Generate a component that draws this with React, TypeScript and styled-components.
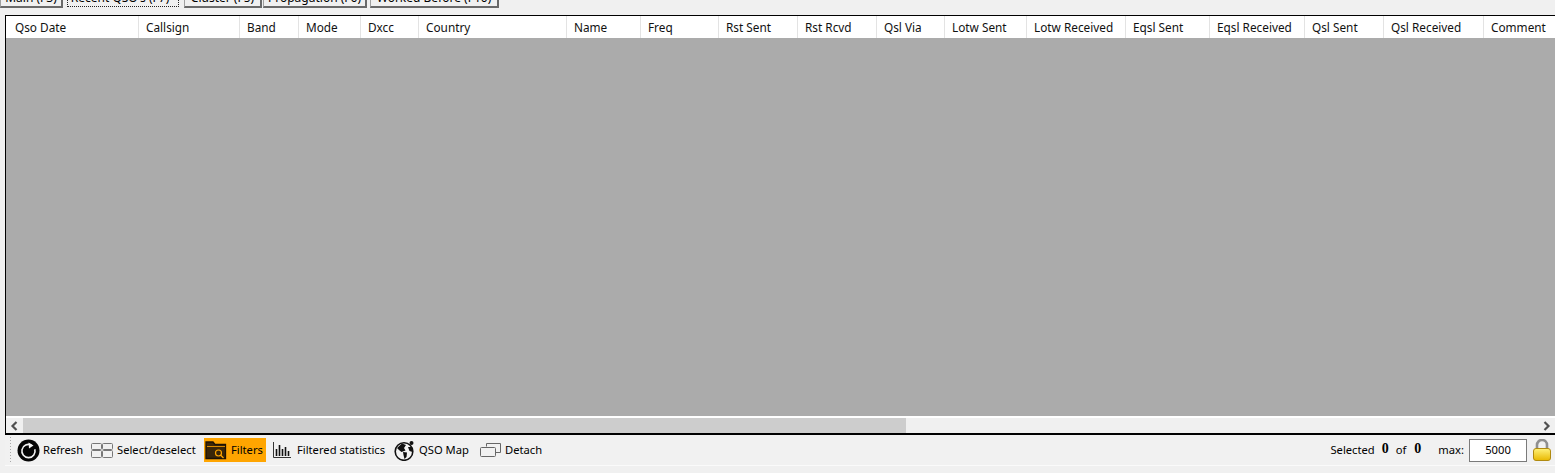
import React from "react";
import styled, { createGlobalStyle } from "styled-components";

const Global = createGlobalStyle`
  html, body { margin: 0; padding: 0; background: #f0f0f0; overflow: hidden; }
  body { font-family: "Noto Sans", "Open Sans", sans-serif; font-size: 12px; color: #000; }
`;

const Page = styled.div`
  width: 1555px;
  height: 473px;
  overflow: hidden;
  display: flex;
  flex-direction: column;
`;

const TabBar = styled.div`
  display: flex;
  height: 23px;
  margin-top: -15px;
  flex: none;
`;

const TabButton = styled.div<{ $w: number; $ml: number; $focus?: boolean }>`
  width: ${(p) => p.$w}px;
  margin-left: ${(p) => p.$ml}px;
  height: ${(p) => (p.$focus ? 22 : 23)}px;
  box-sizing: border-box;
  background: #f0f0f0;
  border: 1px ${(p) => (p.$focus ? "dotted #222" : "solid #a0a0a0")};
  border-right-color: ${(p) => (p.$focus ? "#222" : "#696969")};
  border-bottom-color: ${(p) => (p.$focus ? "#222" : "#696969")};
  border-bottom-width: ${(p) => (p.$focus ? 1 : 2)}px;
  border-right-width: ${(p) => (p.$focus ? 1 : 2)}px;
  padding-right: ${(p) => (p.$focus ? 6 : 0)}px;
  text-align: center;
  font-size: 12px;
  line-height: 24px;
  white-space: nowrap;
`;

const Grid = styled.div`
  margin: 7px 0 0 5px;
  width: 1550px;
  height: 420px;
  box-sizing: border-box;
  border: 1px solid #000;
  border-right: none;
  border-bottom: 2px solid #000;
  display: flex;
  flex-direction: column;
  flex: none;
`;

const HeaderRow = styled.div`
  display: flex;
  height: 22px;
  background: #fff;
  flex: none;
  overflow: hidden;
`;

const HeaderCell = styled.div<{ $w: number; $first?: boolean }>`
  width: ${(p) => p.$w}px;
  flex: none;
  box-sizing: border-box;
  height: 22px;
  padding-left: ${(p) => (p.$first ? 9 : 7)}px;
  font-size: 11.8px;
  line-height: 22px;
  border-right: 1px solid #e3e3e3;
  white-space: nowrap;
  color: #111;
`;

const Body = styled.div`
  flex: 1;
  background: #ababab;
`;

const ScrollBar = styled.div`
  height: 17px;
  background: #f0f0f0;
  display: flex;
  align-items: center;
  flex: none;
  border-top: 2px solid #fff;
  box-sizing: border-box;
`;

const ScrollArrow = styled.div`
  width: 17px;
  height: 15px;
  flex: none;
  display: flex;
  align-items: center;
  justify-content: center;
`;

const ScrollTrack = styled.div`
  flex: 1;
  height: 15px;
`;

const ScrollThumb = styled.div`
  width: 883px;
  height: 15px;
  background: #cdcdcd;
`;

const ToolBar = styled.div`
  height: 30px;
  margin-left: 5px;
  width: 1550px;
  background: #f1f1f1;
  border-bottom: 1px solid #fafafa;
  display: flex;
  align-items: center;
  flex: none;
  font-size: 11.2px;
`;

const Grip = styled.div`
  width: 3px;
  height: 28px;
  margin-left: 4px;
  flex: none;
  background-image: radial-gradient(circle, #a8a8a8 0.9px, transparent 1px);
  background-size: 3px 3px;
`;

const ToolItem = styled.div<{ $w: number; $gap: number; $active?: boolean; $ml?: number; $pl?: number }>`
  width: ${(p) => p.$w}px;
  margin-left: ${(p) => p.$ml ?? 0}px;
  padding-left: ${(p) => p.$pl ?? 0}px;
  box-sizing: border-box;
  height: 24px;
  flex: none;
  display: flex;
  align-items: center;
  gap: ${(p) => p.$gap}px;
  background: ${(p) => (p.$active ? "#ffa500" : "transparent")};
  white-space: nowrap;
`;

const ToolLabel = styled.span`
  margin-top: -2px;
`;

const Icon = styled.svg`
  flex: none;
  display: block;
`;

const Spacer = styled.div`
  flex: 1;
`;

const StatusText = styled.span<{ $ml?: number }>`
  margin-left: ${(p) => p.$ml ?? 0}px;
  margin-top: -2px;
  flex: none;
  white-space: nowrap;
`;

const Count = styled.span<{ $ml: number }>`
  margin-left: ${(p) => p.$ml}px;
  margin-top: -2px;
  font-family: "Liberation Serif", serif;
  font-weight: 700;
  font-size: 14px;
  flex: none;
`;

const MaxBox = styled.div`
  width: 58px;
  height: 23px;
  margin-left: 5px;
  box-sizing: border-box;
  background: #fff;
  border: 1px solid #7a7a7a;
  text-align: center;
  line-height: 20px;
  flex: none;
`;

const LockWrap = styled.div`
  margin: 0 4px 0 6px;
  flex: none;
  display: flex;
`;

const columns: [string, number][] = [
  ["Qso Date", 133],
  ["Callsign", 101],
  ["Band", 59],
  ["Mode", 62],
  ["Dxcc", 58],
  ["Country", 148],
  ["Name", 74],
  ["Freq", 78],
  ["Rst Sent", 79],
  ["Rst Rcvd", 79],
  ["Qsl Via", 68],
  ["Lotw Sent", 82],
  ["Lotw Received", 99],
  ["Eqsl Sent", 84],
  ["Eqsl Received", 95],
  ["Qsl Sent", 79],
  ["Qsl Received", 100],
  ["Comment", 72],
];

export default function App() {
  return (
    <Page>
      <Global />
      <TabBar>
        <TabButton $w={63} $ml={0}>Main (F3)</TabButton>
        <TabButton $w={112} $ml={4} $focus>Recent QSO's (F7)</TabButton>
        <TabButton $w={78} $ml={5}>Cluster (F5)</TabButton>
        <TabButton $w={104} $ml={1}>Propagation (F6)</TabButton>
        <TabButton $w={129} $ml={3}>Worked Before (F10)</TabButton>
      </TabBar>
      <Grid>
        <HeaderRow>
          {columns.map(([label, w], i) => (
            <HeaderCell key={label} $w={w} $first={i === 0}>{label}</HeaderCell>
          ))}
        </HeaderRow>
        <Body />
        <ScrollBar>
          <ScrollArrow>
            <svg width="9" height="10" viewBox="0 0 9 10"><path d="M6.5 1 L2.5 5 L6.5 9" fill="none" stroke="#505050" strokeWidth="2.2" /></svg>
          </ScrollArrow>
          <ScrollTrack><ScrollThumb /></ScrollTrack>
          <ScrollArrow>
            <svg width="9" height="10" viewBox="0 0 9 10"><path d="M2.5 1 L6.5 5 L2.5 9" fill="none" stroke="#505050" strokeWidth="2.2" /></svg>
          </ScrollArrow>
        </ScrollBar>
      </Grid>
      <ToolBar>
        <Grip />
        <ToolItem $w={74} $gap={3} $ml={5}>
          <Icon width="23" height="23" viewBox="0 0 23 23">
            <circle cx="11.5" cy="11.5" r="11" fill="#050505" />
            <path d="M14.5 6.2 A6.6 6.6 0 1 0 17.8 10.2" fill="none" stroke="#f4f4f4" strokeWidth="1.6" />
            <path d="M11.5 3.5 L16.5 6.5 L12 9.5 Z" fill="#f4f4f4" />
          </Icon>
          <ToolLabel>Refresh</ToolLabel>
        </ToolItem>
        <ToolItem $w={113} $gap={4}>
          <Icon width="22" height="15" viewBox="0 0 22 15">
            <rect x="0.5" y="0.5" width="10" height="6" rx="1" fill="none" stroke="#777" />
            <rect x="11.5" y="0.5" width="10" height="6" rx="1" fill="none" stroke="#777" />
            <rect x="0.5" y="7.5" width="10" height="7" rx="1" fill="none" stroke="#777" />
            <rect x="11.5" y="7.5" width="10" height="7" rx="1" fill="none" stroke="#777" />
          </Icon>
          <ToolLabel>Select/deselect</ToolLabel>
        </ToolItem>
        <ToolItem $w={62} $gap={4} $pl={1} $active>
          <Icon width="22" height="20" viewBox="0 0 22 20">
            <path d="M1 18.5 V2 H8 L10 4.5 H20.5 V18.5 Z" fill="#3a2608" stroke="#1c1204" strokeWidth="1.3" />
            <path d="M2 6.5 H20" stroke="#ffa500" strokeWidth="0.8" />
            <circle cx="13.5" cy="13" r="3" fill="none" stroke="#ffa500" strokeWidth="1.2" />
            <path d="M15.5 15 L18.5 18" stroke="#ffa500" strokeWidth="1.3" />
          </Icon>
          <ToolLabel>Filters</ToolLabel>
        </ToolItem>
        <ToolItem $w={121} $gap={6} $ml={7}>
          <Icon width="18" height="18" viewBox="0 0 18 18">
            <path d="M0.5 1 V16.5 H18" fill="none" stroke="#333" strokeWidth="1" />
            <path d="M3.5 8 V15 M6.5 4 V15 M9.5 8 V15 M12.5 6 V15 M15.5 10 V15" stroke="#111" strokeWidth="1.6" />
          </Icon>
          <ToolLabel>Filtered statistics</ToolLabel>
        </ToolItem>
        <ToolItem $w={86} $gap={4}>
          <Icon width="21" height="21" viewBox="0 0 21 21">
            <circle cx="10" cy="11.5" r="8.8" fill="#f4f4f4" stroke="#111" strokeWidth="1.6" />
            <path d="M3 8 L8 3.5 L12 5 L10 8 L11.5 10.5 L7.5 12 L5 10 Z" fill="#111" />
            <path d="M9 12 L13 12.5 L12.5 17 L10.5 19 L9.5 15 Z" fill="#111" />
            <path d="M14 7 L18 7 L18.5 12 L15.5 11 Z" fill="#111" />
            <circle cx="17.5" cy="3" r="2" fill="#111" />
          </Icon>
          <ToolLabel>QSO Map</ToolLabel>
        </ToolItem>
        <ToolItem $w={66} $gap={4}>
          <Icon width="21" height="16" viewBox="0 0 21 16">
            <path d="M6.5 4.5 V1.5 H20.5 V10.5 H15.5" fill="none" stroke="#666" strokeWidth="1" />
            <rect x="0.5" y="5.5" width="15" height="9" rx="1" fill="#f1f1f1" stroke="#666" strokeWidth="1" />
          </Icon>
          <ToolLabel>Detach</ToolLabel>
        </ToolItem>
        <Spacer />
        <StatusText>Selected</StatusText>
        <Count $ml={7}>0</Count>
        <StatusText $ml={7}>of</StatusText>
        <Count $ml={8}>0</Count>
        <StatusText $ml={17}>max:</StatusText>
        <MaxBox>5000</MaxBox>
        <LockWrap>
          <Icon width="18" height="22" viewBox="0 0 18 22">
            <defs>
              <linearGradient id="lockBody" x1="0" y1="0" x2="0" y2="1">
                <stop offset="0" stopColor="#fff27a" />
                <stop offset="1" stopColor="#e8b800" />
              </linearGradient>
            </defs>
            <path d="M4 10 V6 A5 5 0 0 1 14 6 V10" fill="none" stroke="#8f8f8f" strokeWidth="2.6" />
            <rect x="0.5" y="9.5" width="17" height="12" rx="2.5" fill="url(#lockBody)" stroke="#b08a10" strokeWidth="1" />
          </Icon>
        </LockWrap>
      </ToolBar>
    </Page>
  );
}
